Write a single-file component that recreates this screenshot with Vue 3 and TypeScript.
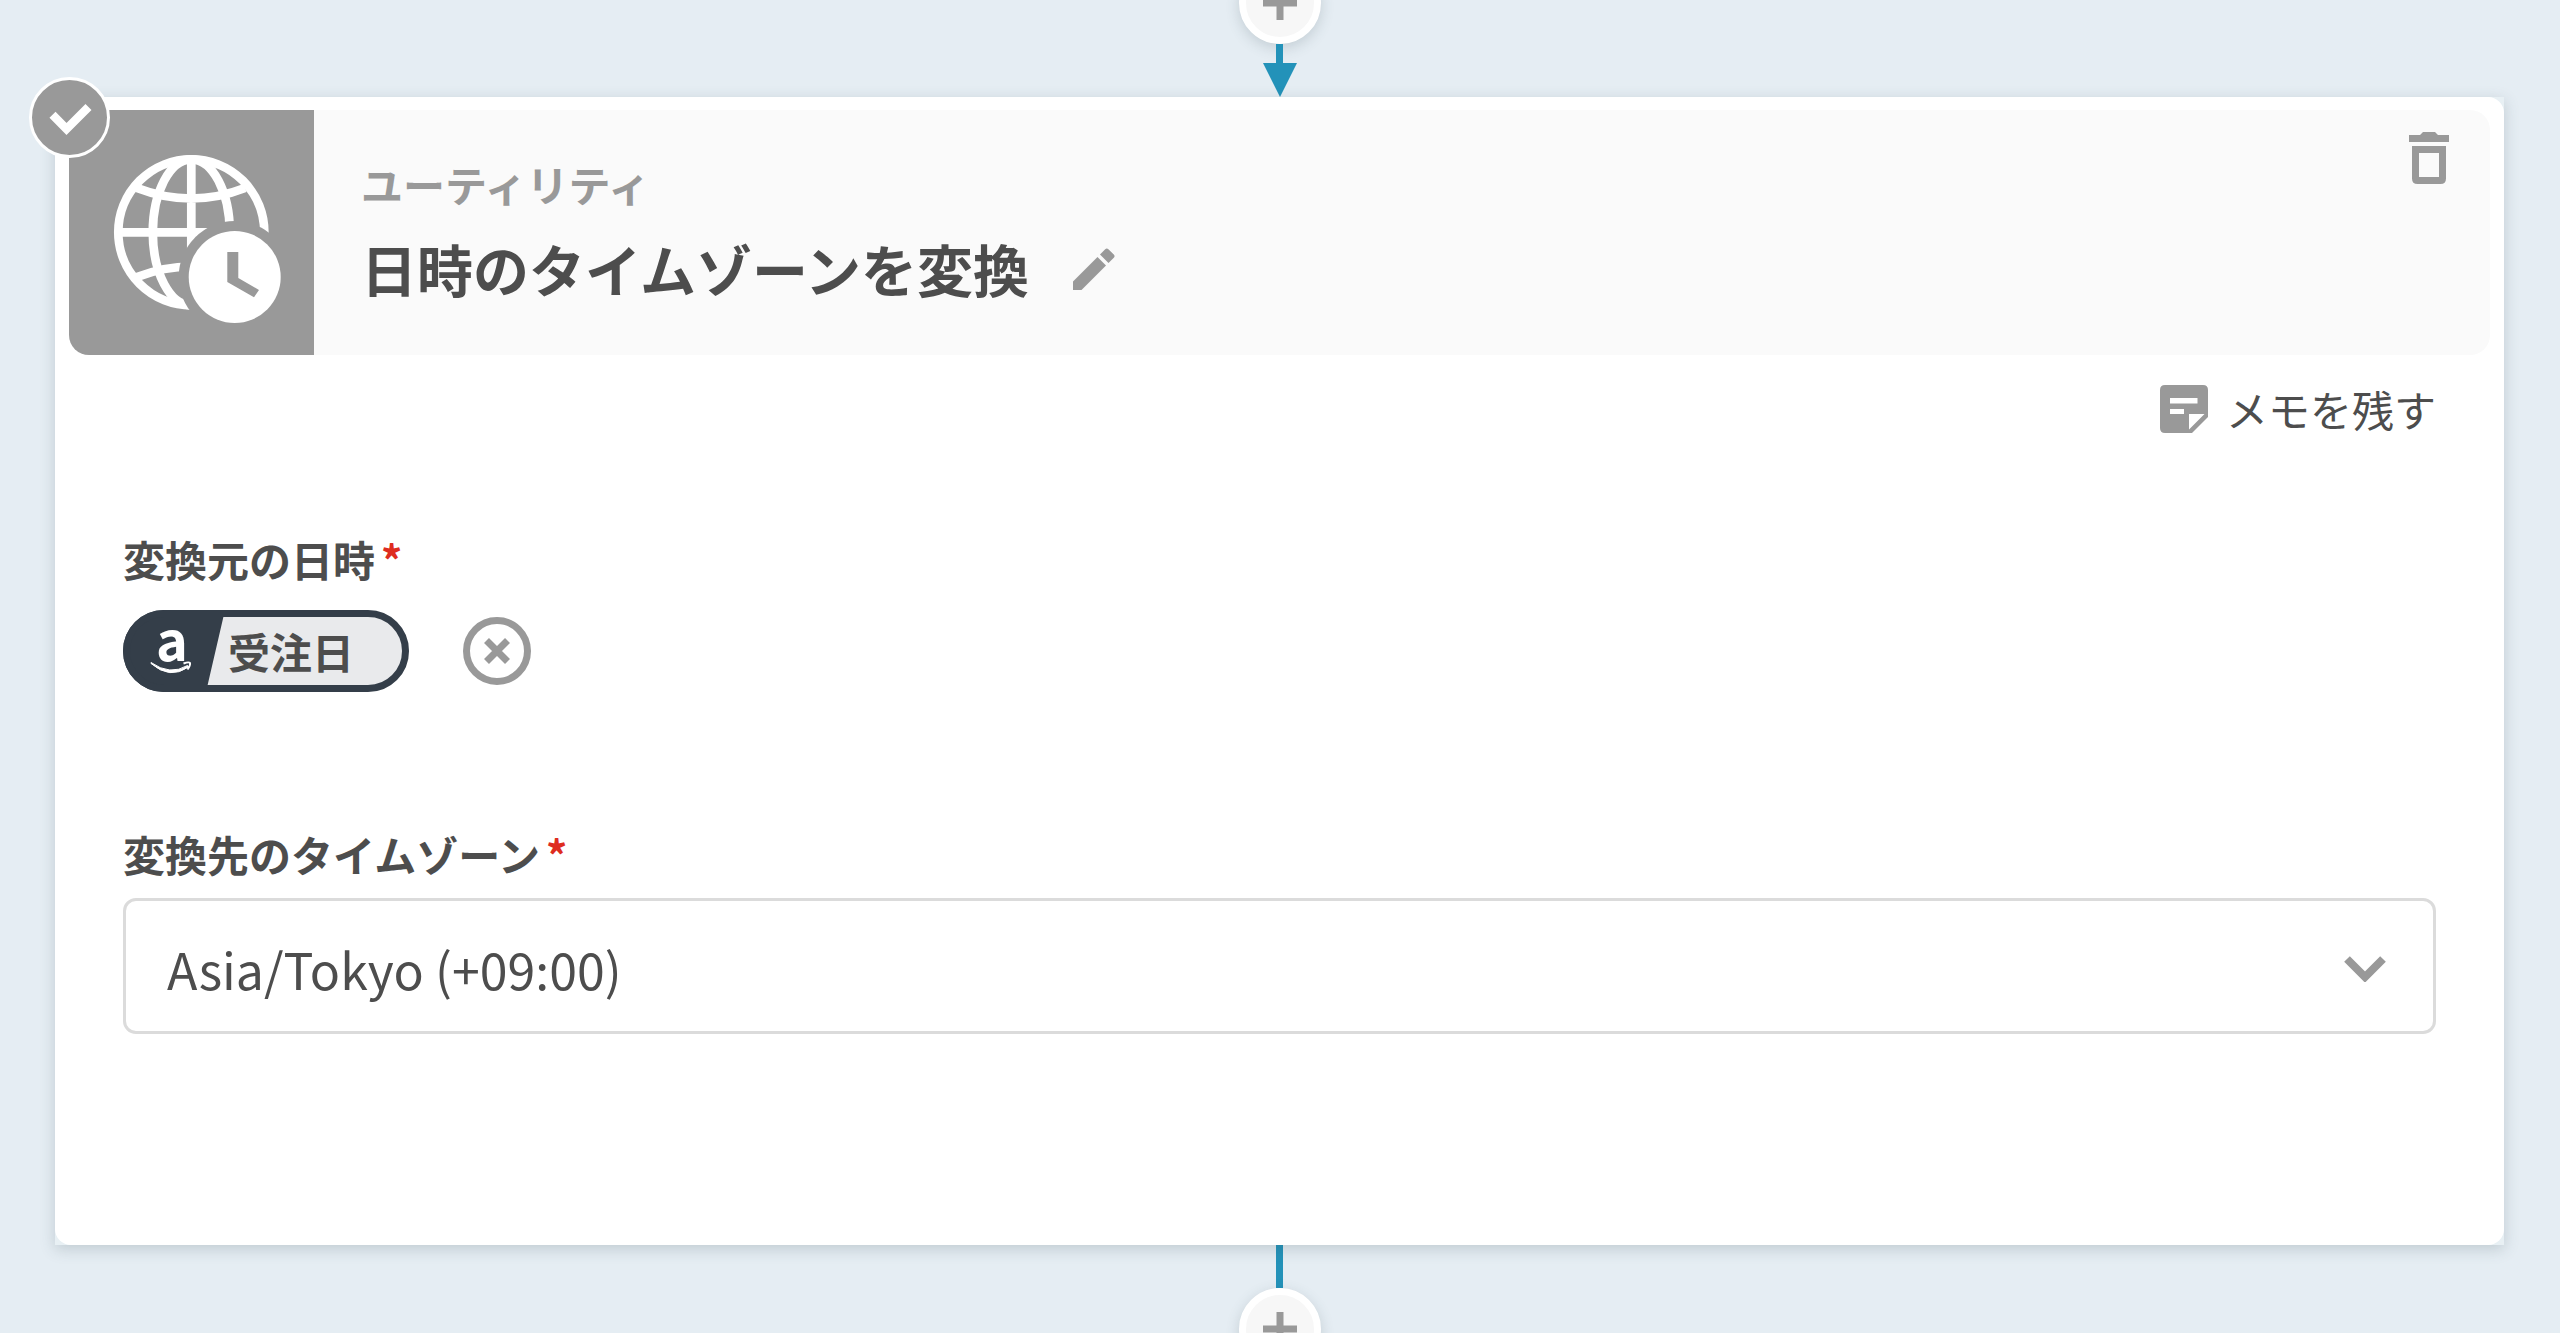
<script setup lang="ts">
import { ref } from 'vue'

const category = 'ユーティリティ'
const title = '日時のタイムゾーンを変換'
const sourceToken = '受注日'
const zones: string[] = ['Asia/Tokyo (+09:00)']
const zone = ref<string>(zones[0])
</script>

<template>
  <main class="flow">
    <div class="connector top">
      <button class="add" type="button" aria-label="追加">
        <svg viewBox="0 0 34 34" aria-hidden="true"><path d="M17 0V34M0 17H34" /></svg>
      </button>
      <span class="line"></span>
      <svg class="arrow" viewBox="0 0 34 34" aria-hidden="true"><path d="M0 0H34L17 34Z" /></svg>
    </div>

    <section class="shell">
      <svg class="badge" viewBox="0 0 81 81" aria-hidden="true">
        <circle cx="40.5" cy="40.5" r="39" />
        <path d="M23.5 37.8L37.5 52L59.5 30" />
      </svg>

      <div class="card">
        <header class="head">
          <svg class="app-icon" viewBox="0 0 245 245" aria-hidden="true">
            <defs>
              <mask id="clock-gap">
                <rect width="245" height="245" fill="#fff" />
                <circle cx="165.7" cy="167" r="56" fill="#000" />
              </mask>
            </defs>
            <g class="globe" mask="url(#clock-gap)">
              <circle cx="122.3" cy="122.3" r="73" />
              <ellipse cx="122.3" cy="122.3" rx="38.5" ry="73" />
              <path d="M122.3 49V196M49 122.3H196M68 78Q122.3 99 176 78M68 167Q122.3 146 176 167" />
            </g>
            <circle class="clock" cx="165.7" cy="167" r="46" />
            <path class="hands" d="M158.3 142H169.3V168L190 180L185 187.3L158.3 172Z" />
          </svg>
          <div class="heading">
            <p class="category">{{ category }}</p>
            <div class="title-row">
              <h2 class="title">{{ title }}</h2>
              <button class="icon-btn pencil" type="button" aria-label="名前を編集">
                <svg viewBox="0 0 42 42" aria-hidden="true">
                  <path d="M0 33.5L24.5 9L33 17.5L8.5 42H0ZM27 6.5L32.2 1.2Q33.8 -.3 35.4 1.2L40.8 6.6Q42.3 8.2 40.8 9.8L35.5 15Z" />
                </svg>
              </button>
            </div>
          </div>
          <button class="icon-btn trash" type="button" aria-label="削除">
            <svg viewBox="0 0 40 52" aria-hidden="true">
              <path fill-rule="evenodd" d="M0 3H11L14 0H26L29 3H40V10H0ZM3 14H37V46.500Q37 52 31.500 52H8.500Q3 52 3 46.500ZM10 21V45H30V21Z" />
            </svg>
          </button>
        </header>

        <div class="body">
          <button class="memo" type="button">
            <svg viewBox="0 0 48 48" aria-hidden="true">
              <path fill-rule="evenodd" d="M5 0H43Q48 0 48 5V32L32 48H5Q0 48 0 43V5Q0 0 5 0ZM10 13V18.500H37.500V13ZM10 24V29H24V24ZM29 29V44.500L44.500 29Z" />
            </svg>
            <span>メモを残す</span>
          </button>

          <div class="field" role="group" aria-labelledby="source-label">
            <p id="source-label" class="label">変換元の日時<span class="req">*</span></p>
            <div class="token-row">
              <div class="token">
                <svg class="brand" viewBox="0 0 102 82" aria-hidden="true">
                  <path class="brand-bg" d="M41 0H102L83 82H41A41 41 0 0 1 41 0Z" />
                  <text x="33" y="51">a</text>
                  <path class="smile" d="M28 52.500Q47 66 64.500 55.500L65.500 57Q47 70 28 53.500Z" />
                  <path class="tip" d="M60.500 53.500Q66 51.500 67 53Q67.500 55.500 64.500 59.500" />
                </svg>
                <span class="token-text">{{ sourceToken }}</span>
              </div>
              <button class="icon-btn clear" type="button" aria-label="クリア">
                <svg viewBox="0 0 68 68" aria-hidden="true">
                  <circle cx="34" cy="34" r="30.500" />
                  <path d="M23.500 23.500L44.500 44.500M44.500 23.500L23.500 44.500" />
                </svg>
              </button>
            </div>
          </div>

          <div class="field zone-field">
            <label class="label" for="zone">変換先のタイムゾーン<span class="req">*</span></label>
            <div class="select">
              <select id="zone" v-model="zone">
                <option v-for="z in zones" :key="z" :value="z">{{ z }}</option>
              </select>
              <svg class="chevron" viewBox="0 0 42 26" aria-hidden="true"><path d="M3 3L21 21L39 3" /></svg>
            </div>
          </div>
        </div>
      </div>
    </section>

    <div class="connector bottom">
      <span class="line"></span>
      <button class="add" type="button" aria-label="追加">
        <svg viewBox="0 0 34 34" aria-hidden="true"><path d="M17 0V34M0 17H34" /></svg>
      </button>
    </div>
  </main>
</template>

<style>
body {
  margin: 0;
  background: #e5edf3;
}
</style>

<style scoped>
.flow {
  height: 100vh;
  overflow: hidden;
  box-sizing: border-box;
  padding: 0 56px 0 55px;
  background: #e5edf3;
  color: #4d4d4d;
  font-family: "Noto Sans CJK JP", "Noto Sans", sans-serif;
}
button {
  padding: 0;
  border: 0;
  background: none;
  color: inherit;
  font-family: inherit;
  cursor: pointer;
}
svg {
  display: block;
}
.connector {
  display: flex;
  flex-direction: column;
  align-items: center;
}
.top {
  margin-top: -38px;
}
.add {
  display: flex;
  flex: none;
  align-items: center;
  justify-content: center;
  box-sizing: border-box;
  width: 82px;
  height: 82px;
  border: 7px solid #fff;
  border-radius: 50%;
  background: #f7f7f7;
  box-shadow: 0 4px 14px rgba(60, 80, 90, 0.2);
}
.add svg {
  width: 34px;
  height: 34px;
  fill: none;
  stroke: #999;
  stroke-width: 7;
}
.line {
  width: 7px;
  height: 19px;
  background: #2392b9;
}
.bottom .line {
  height: 43px;
}
.arrow {
  width: 34px;
  height: 34px;
  fill: #2392b9;
}
.shell {
  position: relative;
  background: #e8f0f4;
  box-shadow: 0 4px 14px rgba(60, 80, 90, 0.22);
}
.badge {
  position: absolute;
  left: -26px;
  top: -20px;
  width: 81px;
  height: 81px;
}
.badge circle {
  fill: #999;
  stroke: #fff;
  stroke-width: 3;
}
.badge path {
  fill: none;
  stroke: #fff;
  stroke-width: 8.5;
}
.card {
  padding: 13px 14px 211px;
  border-radius: 16px;
  background: #fff;
}
.head {
  display: flex;
  overflow: hidden;
  border-radius: 20px;
  background: #fafafa;
}
.app-icon {
  flex: none;
  width: 245px;
  height: 245px;
  background: #999;
}
.globe {
  fill: none;
  stroke: #fff;
  stroke-width: 8.7;
}
.clock {
  fill: #fff;
}
.hands {
  fill: #999;
}
.heading {
  flex: 1;
  padding: 44px 0 0 47px;
}
.category {
  margin: 0;
  color: #999;
  font-size: 42px;
  font-weight: 700;
  line-height: 60px;
}
.title-row {
  display: flex;
  align-items: center;
  gap: 44px;
  margin-top: 14px;
}
.title {
  margin: 0;
  font-size: 56px;
  font-weight: 700;
  line-height: 80px;
}
.icon-btn svg {
  fill: #999;
}
.pencil {
  margin-top: 2px;
}
.pencil svg {
  width: 42px;
  height: 42px;
}
.trash {
  align-self: flex-start;
  margin: 22px 41px 0 0;
}
.trash svg {
  width: 40px;
  height: 52px;
}
.body {
  display: flex;
  flex-direction: column;
  padding: 24px 54px 0;
}
.memo {
  display: flex;
  align-items: center;
  align-self: flex-end;
  gap: 18px;
  font-size: 42px;
  line-height: 60px;
}
.memo svg {
  width: 48px;
  height: 48px;
  fill: #999;
}
.field {
  margin-top: 90px;
}
.label {
  display: block;
  margin: 0;
  font-size: 42px;
  font-weight: 700;
  line-height: 60px;
}
.req {
  margin-left: 6px;
  color: #de2c20;
}
.token-row {
  display: flex;
  align-items: center;
  gap: 54px;
  margin-top: 21px;
}
.token {
  display: flex;
  align-items: center;
  box-sizing: border-box;
  height: 82px;
  padding-right: 55px;
  border-radius: 41px;
  background: #e9eaec;
  position: relative;
}
.token::after {
  content: "";
  position: absolute;
  inset: 0;
  border: 7px solid #343e49;
  border-radius: 41px;
}
.brand {
  flex: none;
  width: 102px;
  height: 82px;
  overflow: visible;
}
.brand-bg {
  fill: #343e49;
}
.brand text {
  fill: #fff;
  font: 700 54px "Noto Sans CJK JP", sans-serif;
}
.smile {
  fill: #fff;
  stroke: #fff;
  stroke-width: 1;
}
.tip {
  fill: none;
  stroke: #fff;
  stroke-width: 2;
}
.token-text {
  margin-left: 3px;
  font-size: 42px;
  font-weight: 700;
  line-height: 60px;
}
.clear svg {
  width: 68px;
  height: 68px;
  fill: none;
  stroke: #999;
  stroke-width: 7;
}
.zone-field {
  margin-top: 132px;
}
.select {
  display: grid;
  align-items: center;
  margin-top: 14px;
}
.select > * {
  grid-area: 1 / 1;
}
.select select {
  width: 100%;
  height: 136px;
  box-sizing: border-box;
  margin: 0;
  padding: 4px 100px 0 41px;
  appearance: none;
  border: 3px solid #dbdbdb;
  border-radius: 13px;
  background: #fff;
  color: inherit;
  font-family: inherit;
  font-size: 50px;
}
.chevron {
  justify-self: end;
  width: 42px;
  height: 26px;
  margin: 6px 50px 0 0;
  pointer-events: none;
  fill: none;
  stroke: #999;
  stroke-width: 8;
}
</style>
